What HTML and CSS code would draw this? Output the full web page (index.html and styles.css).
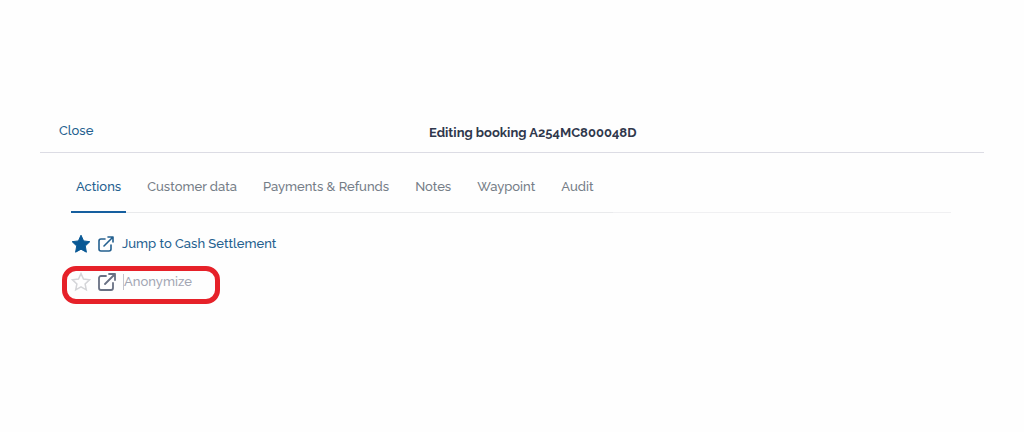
FILE: index.html
```html
<!DOCTYPE html>
<html lang="en">
<head>
    <meta charset="UTF-8">
    <meta name="viewport" content="width=device-width, initial-scale=1.0">
    <title>Editing booking</title>
    <link rel="stylesheet" href="styles.css">
</head>
<body>
    <div class="dialog">
        <header class="header">
            <button type="button" class="close">Close</button>
            <h1>Editing booking A254MC800048D</h1>
        </header>

        <main class="content">
            <!-- Tabs -->
            <nav class="tabs">
                <div class="tab-list">
                    <a href="#actions" class="tab active">Actions</a>
                    <a href="#customer" class="tab">Customer data</a>
                    <a href="#payments" class="tab">Payments &amp; Refunds</a>
                    <a href="#notes" class="tab">Notes</a>
                    <a href="#waypoint" class="tab">Waypoint</a>
                    <a href="#audit" class="tab">Audit</a>
                </div>
            </nav>

            <!-- Booking actions -->
            <ul class="actions">
                <li class="action">
                    <button type="button" class="star" aria-label="Remove favourite">
                        <svg viewBox="0 0 20 20"><path d="M10 1.2l2.6 5.7 6.2.8-4.5 4.3 1.1 6.2-5.4-3-5.4 3 1.1-6.2L1.2 7.7l6.2-.8z"/></svg>
                    </button>
                    <a href="#settlement" class="action-link">
                        <svg class="external" viewBox="0 0 16 16"><path d="M7 3H3a2 2 0 0 0-2 2v8a2 2 0 0 0 2 2h8a2 2 0 0 0 2-2V9M10 1h5v5M15 1L6 10"/></svg>
                        <span>Jump to Cash Settlement</span>
                    </a>
                </li>
                <li class="action disabled highlighted">
                    <button type="button" class="star" aria-label="Add favourite">
                        <svg viewBox="0 0 20 20"><path d="M10 1.6l2.5 5.5 6 .7-4.4 4.1 1.2 6-5.3-3-5.3 3 1.2-6L1.5 7.8l6-.7z"/></svg>
                    </button>
                    <a href="#anonymize" class="action-link">
                        <svg class="external" viewBox="0 0 18 18"><path d="M8 3H3a2 2 0 0 0-2 2v10a2 2 0 0 0 2 2h10a2 2 0 0 0 2-2v-5M11 1h6v6M17 1L7 11"/></svg>
                        <span>Anonymize</span>
                    </a>
                </li>
            </ul>
        </main>
    </div>
</body>
</html>
```
FILE: styles.css
```css
* {
    box-sizing: border-box;
}

body {
    margin: 0;
    background: #fefefe;
    font-family: Raleway, Lato, "Open Sans", sans-serif;
    font-size: 13px;
    font-weight: 500;
    line-height: 20px;
    color: #757d87;
}

a {
    color: inherit;
    text-decoration: none;
}

button {
    padding: 0;
    border: 0;
    background: none;
    font: inherit;
    cursor: pointer;
}

.dialog {
    margin: 112px 40px 0;
}

.header {
    display: flex;
    align-items: flex-end;
    padding: 9px 12px 9px 19px;
    border-bottom: 1px solid #dcdce4;
}

.close {
    align-self: flex-start;
    color: #24608f;
}

h1 {
    flex: 1;
    margin: 2px 0 0;
    font-size: 13px;
    line-height: 20px;
    font-weight: 700;
    text-align: center;
    color: #30384c;
}

.content {
    padding: 16px 33px 0 31px;
}

.tabs {
    display: flex;
    border-bottom: 1px solid #f0f0f2;
}

.tab-list {
    display: flex;
    gap: 16px;
    padding-right: 14px;
    margin-bottom: -1px;
    border-bottom: 1px solid #e9eaec;
}

.tab {
    margin-bottom: -1px;
    padding: 8px 5px 14px;
    border-bottom: 2px solid transparent;
    white-space: nowrap;
}

.tab.active {
    color: #24608f;
    border-bottom-color: #165f9f;
}

.actions {
    display: flex;
    flex-direction: column;
    align-items: flex-start;
    margin: 14px 0 0;
    padding: 0;
    list-style: none;
}

.action {
    display: flex;
    align-items: center;
    gap: 7px;
    height: 34px;
}

.star {
    width: 20px;
    height: 20px;
}

.star svg {
    display: block;
    fill: #085895;
    stroke: #085895;
    stroke-width: 1;
}

.action-link {
    display: flex;
    align-items: center;
    gap: 8px;
    color: #24608f;
}

.external {
    width: 16px;
    height: 16px;
    fill: none;
    stroke: currentColor;
    stroke-width: 1.6;
    stroke-linecap: round;
    stroke-linejoin: round;
}

.disabled .star svg {
    fill: none;
    stroke: #d4d5d8;
    stroke-width: 1.5;
}

.disabled .action-link {
    gap: 7px;
    color: #a3a6b4;
}

.disabled .external {
    width: 18px;
    height: 18px;
    stroke: #687083;
    stroke-width: 1.8;
}

.disabled span {
    border-left: 1px solid #c3c5cd;
    line-height: 16px;
}

.highlighted {
    width: 158px;
    height: 38px;
    margin: 5px 0 0 -9px;
    padding: 0 4px 6px;
    border: 5px solid #e62129;
    border-radius: 14px;
}
```
